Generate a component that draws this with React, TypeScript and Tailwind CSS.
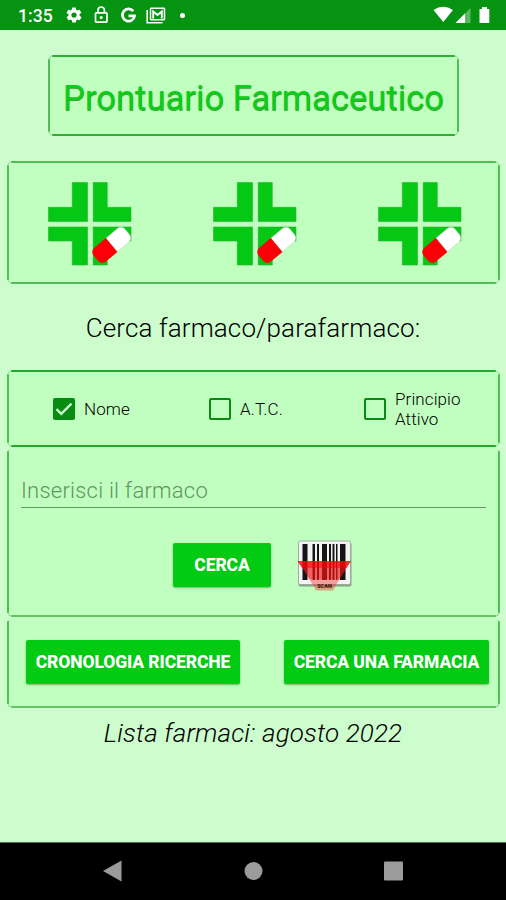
import React from "react";

const roboto = "font-[Roboto,'Liberation_Sans',sans-serif]";

type PanelProps = {
  className?: string;
  h?: string;
  v?: string;
  top?: boolean;
  children: React.ReactNode;
};

/* Panel with separately drawn edges, leaving softly notched corners. */
function Panel({ className = "", h = "bg-[#2fae36]", v = "bg-[#4fbf55]", top = true, children }: PanelProps) {
  return (
    <section className={`relative rounded-[6px] bg-[#c0ffc0] ${className}`}>
      <span className={`absolute inset-x-0 bottom-0 rounded-[6px] border border-[#8fdc91] ${top ? "top-0" : "top-[1px] border-t-transparent"}`} />
      {top && <span className={`absolute top-0 left-[4px] right-[4px] h-[2px] rounded-full ${h}`} />}
      <span className={`absolute bottom-0 left-[4px] right-[4px] h-[2px] rounded-full ${h}`} />
      <span className={`absolute left-0 top-[4px] bottom-[4px] w-[2px] rounded-full ${v}`} />
      <span className={`absolute right-0 top-[4px] bottom-[4px] w-[2px] rounded-full ${v}`} />
      {children}
    </section>
  );
}

function PharmacyCross() {
  return (
    <svg width="84" height="84" viewBox="0 0 84 84">
      <g fill="#05c814" stroke="#22b52c" strokeWidth="0.6" strokeLinejoin="round">
        <path d="M24.3.5H39.5V39.5H.5V25.3H24.3Z" />
        <path d="M45.2.5H59.3V25.3H83V39.5H45.2Z" />
        <path d="M.5 45H39.5V83H24.3V59H.5Z" />
        <path d="M45.2 45H83V59H59.3V83H45.2Z" />
      </g>
      <g transform="translate(63.6 63) rotate(-40)">
        <path d="M0-8.9H15a5.500 5.500 0 0 1 5.500 5.500V3.400a5.500 5.500 0 0 1-5.500 5.500H0Z" fill="#fff" stroke="#b9c9b9" strokeWidth=".5" />
        <path d="M0-9.100H-15a5.500 5.500 0 0 0-5.500 5.500V3.600a5.500 5.500 0 0 0 5.500 5.500H0Z" fill="#fb0007" />
      </g>
    </svg>
  );
}

function Box({ checked = false }: { checked?: boolean }) {
  return (
    <span className={`flex size-[22px] shrink-0 items-center justify-center rounded-[2px] border-2 border-[#078b12] ${checked ? "bg-[#078b12]" : ""}`}>
      {checked && (
        <svg width="18" height="18" viewBox="0 0 18 18" fill="none" stroke="#c8ffc8" strokeWidth="2.4">
          <path d="M1.5 9.2 6.2 13.8 16.5 3.6" />
        </svg>
      )}
    </span>
  );
}

const bars = [
  [4.5, 5], [14.5, 2.5], [19, 2], [24, 5], [31, 2], [34.5, 2], [38, 1.5], [42, 5.5],
];

function Barcode() {
  return (
    <svg width="56" height="54" viewBox="0 0 56 54" className="overflow-visible">
      <rect x="1.5" y="2.500" width="53" height="44" rx="2" fill="#6d8a6d" opacity=".75" />
      <rect x="1.5" y="1" width="52" height="43.5" rx="2" fill="#f6f3f6" stroke="#9da79d" strokeWidth=".9" />
      {bars.map(([x, w]) => (
        <rect key={x} x={x + 1} y="4" width={w} height="36" fill="#151515" />
      ))}
      <path d="M.5 21H54L48 30 36 50.5H19L7 30Z" fill="#ed3b32" opacity=".45" />
      <path d="M.5 21H54L48 30 42.5 39.5H12.5L7 30Z" fill="#f60000" opacity=".4" />
      <path d="M.5 21H54L49.500 28H5Z" fill="#f60000" opacity=".5" />
      <text x="27.5" y="48.3" textAnchor="middle" fontSize="5.5" fontWeight="900" fill="#42150f" className={roboto}>SCAN</text>
    </svg>
  );
}

function Button({ className, children }: { className: string; children: React.ReactNode }) {
  return (
    <button className={`h-[44px] shrink-0 whitespace-nowrap rounded-[2px] bg-[#03ca12] pt-[1px] text-[17.5px] font-extrabold tracking-[-0.1px] text-white shadow-[0_1px_2px_rgba(0,80,0,0.4)] ${className}`}>
      {children}
    </button>
  );
}

function StatusBar() {
  return (
    <header className="flex h-[30px] items-center bg-[#059311] pl-[18px] text-white">
      <span className="mt-[2px] w-[48px] text-[17.6px] font-medium">1:35</span>
      <svg width="18" height="18" viewBox="0 0 24 24" fill="currentColor" className="-ml-[1px]">
        <path fillRule="evenodd" d="M19.4 13a7.500 7.500 0 0 0 0-2l2.100-1.600a.5.5 0 0 0 .1-.7l-2-3.400a.5.5 0 0 0-.6-.2l-2.500 1a7.700 7.700 0 0 0-1.700-1l-.4-2.600a.5.5 0 0 0-.5-.5h-4a.5.5 0 0 0-.5.5l-.4 2.600a7.700 7.700 0 0 0-1.700 1l-2.500-1a.5.5 0 0 0-.6.2l-2 3.400a.5.5 0 0 0 .1.700L4.600 11a7.500 7.500 0 0 0 0 2l-2.100 1.600a.5.5 0 0 0-.1.700l2 3.400a.5.5 0 0 0 .6.2l2.500-1a7.700 7.700 0 0 0 1.700 1l.4 2.600a.5.5 0 0 0 .5.500h4a.5.5 0 0 0 .5-.5l.4-2.600a7.700 7.700 0 0 0 1.700-1l2.500 1a.5.5 0 0 0 .6-.2l2-3.400a.5.5 0 0 0-.1-.7ZM12 15.500a3.500 3.500 0 1 1 0-7 3.500 3.500 0 0 1 0 7Z" />
      </svg>
      <svg width="15" height="18" viewBox="0 0 15 18" fill="none" stroke="currentColor" strokeWidth="1.7" className="ml-[11px]">
        <rect x="1.500" y="6.800" width="11.500" height="9.400" rx="1" />
        <path d="M4 6.500V4.200a3.200 3.200 0 0 1 6.400 0V6.500" />
        <circle cx="7.200" cy="11.500" r="1.500" fill="currentColor" stroke="none" />
      </svg>
      <svg width="17" height="17" viewBox="0 0 17 17" fill="none" stroke="currentColor" strokeWidth="2.700" className="ml-[11px]">
        <path d="M13.300 4.200A6.100 6.100 0 1 0 14.600 8.900H8.500" />
      </svg>
      <svg width="20" height="17" viewBox="0 0 20 17" fill="none" stroke="currentColor" className="ml-[9px]">
        <path d="M1.200 3V15.700H16.500" strokeWidth="1.600" />
        <rect x="4.500" y="1.200" width="14" height="11.500" rx=".6" strokeWidth="1.500" />
        <path d="M7.200 11.500V4.500L11.500 8 15.800 4.500V11.500" strokeWidth="1.900" />
      </svg>
      <span className="ml-[14px] size-[5px] rounded-full bg-white" />
      <svg width="58" height="18" viewBox="0 0 58 18" fill="currentColor" className="ml-auto mr-[15px]">
        <path d="M.5 4Q10 -2.500 20 4L10.300 16Z" />
        <path d="M22.500 17 37.500 2V17Z" opacity=".35" />
        <path d="M22.500 17 32 7.500V17Z" />
        <path d="M46.500 3H49V1H54V3H56.300V17H46.500Z" />
      </svg>
    </header>
  );
}

export default function App() {
  return (
    <div className={`flex h-[900px] w-[506px] flex-col overflow-hidden bg-[#cdfccd] text-[#111c11] ${roboto}`}>
      <StatusBar />
      <main className="flex flex-1 flex-col">
        <Panel className="mt-[25px] ml-[48px] flex h-[81px] w-[411px] items-center justify-center">
          <h1 className="mt-[5px] whitespace-nowrap text-[34.6px] leading-none text-[#0ccd17] [text-shadow:0.3px_0.6px_0.8px_#43953f]">Prontuario Farmaceutico</h1>
        </Panel>
        <Panel className="mr-[6px] ml-[7px] mt-[25px] flex h-[123px] items-center justify-between pt-[2px] pr-[38px] pl-[41px]" h="bg-[#50bd55]">
          <PharmacyCross />
          <PharmacyCross />
          <PharmacyCross />
        </Panel>
        <h2 className="mt-[29px] mb-[26px] h-[31px] text-center text-[26px] font-light leading-[31px] tracking-[0.12px] text-black">Cerca farmaco/parafarmaco:</h2>
        <Panel className="mr-[6px] ml-[7px] flex h-[77px] items-center text-[17px] font-light leading-[20px] tracking-[0.1px] text-black" h="bg-[#21a92c]">
          <label className="ml-[46px] flex w-[156px] items-center gap-[9px]"><Box checked />Nome</label>
          <label className="flex w-[155px] items-center gap-[9px]"><Box />A.T.C.</label>
          <label className="flex items-center gap-[9px]"><Box /><span>Principio<br />Attivo</span></label>
        </Panel>
        <Panel className="mr-[6px] ml-[7px] flex h-[170px] flex-col" h="bg-[#62c466]" top={false}>
          <div className="mt-[26px] ml-[14px] mr-[14px] h-[35px] border-b border-[#5ba15d] pt-[4px] text-[22px] font-light leading-[28px] tracking-[0.23px] text-[#5f955f]">Inserisci il farmaco</div>
          <div className="mt-[32px] ml-[166px] flex">
            <Button className="mt-[3px] w-[98px]">CERCA</Button>
            <span className="ml-[26px]"><Barcode /></span>
          </div>
        </Panel>
        <Panel className="mr-[6px] ml-[7px] flex h-[91px] justify-between pt-[23px] pr-[11px] pl-[19px]" h="bg-[#62c466]" top={false}>
          <Button className="w-[214px]">CRONOLOGIA RICERCHE</Button>
          <Button className="w-[205px]">CERCA UNA FARMACIA</Button>
        </Panel>
        <p className="mt-[10px] text-center text-[26px] font-light leading-[31px] tracking-[0.13px] text-black italic">Lista farmaci: agosto 2022</p>
      </main>
      <nav className="h-[58px] border-t border-[#526852] bg-black">
        <svg width="506" height="57" fill="#9b9b9b">
          <path d="M103 28 121.500 17.500V38.500Z" />
          <circle cx="253.500" cy="28" r="9" />
          <rect x="384" y="18.500" width="19" height="19" rx="1" />
        </svg>
      </nav>
    </div>
  );
}
